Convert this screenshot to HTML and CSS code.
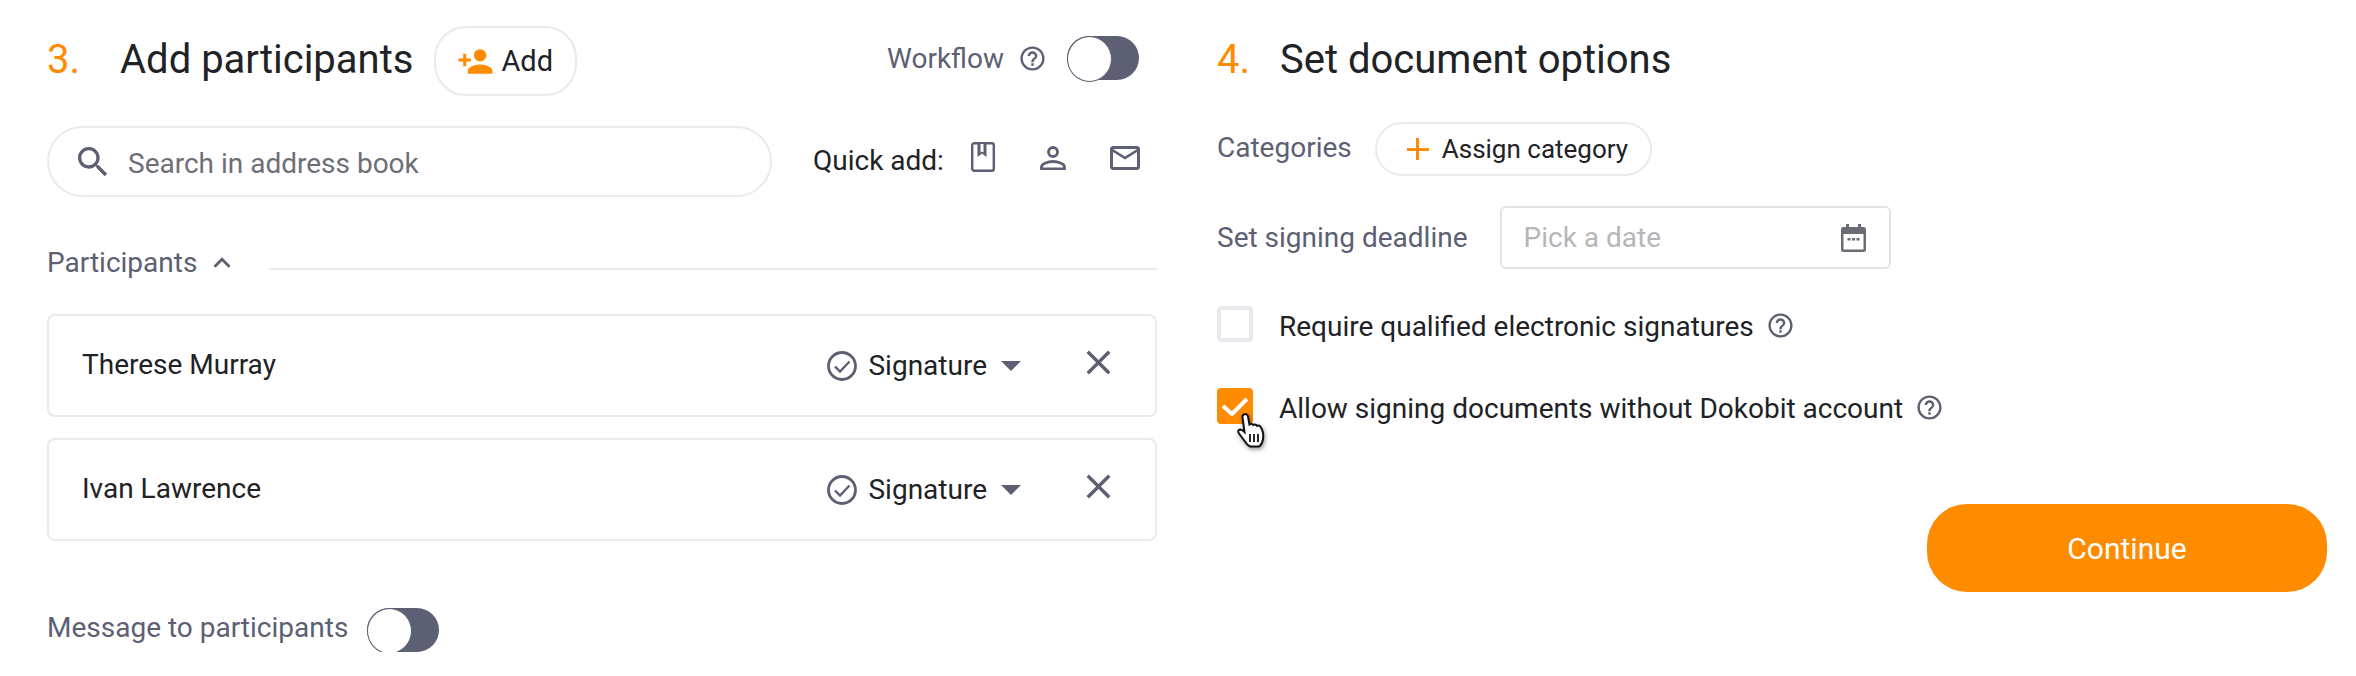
FILE: index.html
```html
<!DOCTYPE html>
<html lang="en">
<head>
    <meta charset="UTF-8">
    <title>Add participants</title>
    <link rel="stylesheet" href="styles.css">
</head>
<body>

<svg class="icon-defs" aria-hidden="true">
    <symbol id="i-help" viewBox="0 0 24 24"><path d="M11 18h2v-2h-2v2zm1-16C6.48 2 2 6.48 2 12s4.48 10 10 10 10-4.48 10-10S17.52 2 12 2zm0 18c-4.41 0-8-3.59-8-8s3.59-8 8-8 8 3.59 8 8-3.59 8-8 8zm0-14c-2.21 0-4 1.79-4 4h2c0-1.1.9-2 2-2s2 .9 2 2c0 2-3 1.75-3 5h2c0-2.25 3-2.5 3-5 0-2.21-1.79-4-4-4z"/></symbol>
    <symbol id="i-close" viewBox="0 0 24 24"><path d="M19 6.41L17.59 5 12 10.59 6.41 5 5 6.41 10.59 12 5 17.59 6.41 19 12 13.41 17.59 19 19 17.59 13.41 12z"/></symbol>
    <symbol id="i-signed" viewBox="0 0 30 30"><circle cx="15" cy="15" r="13.5" fill="none" stroke="currentColor" stroke-width="2.8"/><path d="M8 15.5l5 5 9.5-10" fill="none" stroke="currentColor" stroke-width="2.4"/></symbol>
</svg>

<div class="page">

    <!-- Step 3 -->
    <section class="col col-left">
        <div class="head">
            <span class="num">3.</span>
            <h2>Add participants</h2>
            <button class="btn-add">
                <svg class="ic-add" viewBox="0 0 24 24"><path d="M15 12c2.21 0 4-1.79 4-4s-1.79-4-4-4-4 1.79-4 4 1.79 4 4 4zm-9-2V7H4v3H1v2h3v3h2v-3h3v-2H6zm9 4c-2.67 0-8 1.34-8 4v2h16v-2c0-2.66-5.33-4-8-4z"/></svg>
                Add
            </button>
            <div class="workflow">
                <span class="muted">Workflow</span>
                <svg class="ic-help"><use href="#i-help"/></svg>
                <span class="toggle"></span>
            </div>
        </div>

        <div class="search-row">
            <div class="search">
                <svg class="ic-search" viewBox="0 0 24 24"><path d="M15.5 14h-.79l-.28-.27C15.41 12.59 16 11.11 16 9.5 16 5.91 13.09 3 9.5 3S3 5.91 3 9.5 5.91 16 9.5 16c1.61 0 3.09-.59 4.23-1.57l.27.28v.79l5 4.99L20.49 19l-4.99-5zm-6 0C7.01 14 5 11.99 5 9.5S7.01 5 9.5 5 14 7.01 14 9.5 11.99 14 9.5 14z"/></svg>
                <span class="placeholder">Search in address book</span>
            </div>
            <span class="quick-label">Quick add:</span>
            <svg class="ic-book" viewBox="0 0 24 30"><rect x="1.2" y="1.2" width="21.6" height="27.6" rx="2" fill="none" stroke="currentColor" stroke-width="2.4"/><path d="M6.5 2h9v13l-4.500-3.500L6.500 15z"/><path d="M9.500 2h3v8.500l-1.500-1-1.500 1z" fill="#fff"/></svg>
            <svg class="ic-person" viewBox="0 0 26 24"><circle cx="13" cy="6" r="4.500" fill="none" stroke="currentColor" stroke-width="2.800"/><path d="M1.500 22.800v-1.800c0-3.500 7-5.500 11.500-5.500s11.500 2 11.500 5.500v1.800z" fill="none" stroke="currentColor" stroke-width="2.800"/></svg>
            <svg class="ic-mail" viewBox="2 4 20 16"><path d="M20 4H4c-1.100 0-1.990.9-1.990 2L2 18c0 1.100.9 2 2 2h16c1.100 0 2-.9 2-2V6c0-1.100-.9-2-2-2zm0 14H4V8l8 5 8-5v10zm-8-7L4 6h16l-8 5z"/></svg>
        </div>

        <div class="list-head">
            <span class="muted">Participants</span>
            <svg class="ic-chevron" viewBox="0 0 24 24"><path d="M12 8l-6 6 1.410 1.410L12 10.830l4.590 4.580L18 14z"/></svg>
            <span class="rule"></span>
        </div>

        <div class="cards">
            <div class="card">
                <span class="name">Therese Murray</span>
                <svg class="ic-signed"><use href="#i-signed"/></svg>
                <span class="role">Signature</span>
                <span class="caret"></span>
                <svg class="ic-close"><use href="#i-close"/></svg>
            </div>
            <div class="card">
                <span class="name">Ivan Lawrence</span>
                <svg class="ic-signed"><use href="#i-signed"/></svg>
                <span class="role">Signature</span>
                <span class="caret"></span>
                <svg class="ic-close"><use href="#i-close"/></svg>
            </div>
        </div>

        <div class="message-row">
            <span class="muted">Message to participants</span>
            <span class="toggle"></span>
        </div>
    </section>

    <!-- Step 4 -->
    <section class="col col-right">
        <div class="head">
            <span class="num num-narrow">4.</span>
            <h2>Set document options</h2>
        </div>

        <div class="cat-row">
            <span class="muted">Categories</span>
            <button class="btn-assign"><span class="plus"></span>Assign category</button>
        </div>

        <div class="date-row">
            <span class="muted">Set signing deadline</span>
            <div class="date-input">
                <span class="date-placeholder">Pick a date</span>
                <svg class="ic-cal" viewBox="0 0 25 28"><path d="M5 0h3v3h9V0h3v3h2.500A2.500 2.500 0 0 1 25 5.500v20a2.500 2.500 0 0 1-2.500 2.500h-20A2.500 2.500 0 0 1 0 25.500v-20A2.500 2.500 0 0 1 2.500 3H5zM2.500 10v15.500h20V10z"/><path d="M6.500 14h3v2.500h-3zM11 14h3v2.500h-3zM15.500 14h3v2.500h-3z"/></svg>
            </div>
        </div>

        <div class="check-row">
            <span class="checkbox"></span>
            <span class="check-text">Require qualified electronic signatures</span>
            <svg class="ic-help-sm"><use href="#i-help"/></svg>
        </div>

        <div class="check-row check-row-2">
            <span class="checkbox checked">
                <svg class="ic-tick" viewBox="0 0 28 19"><path d="M2 9l9 8L26 2" fill="none" stroke="#fff" stroke-width="4"/></svg>
                <!-- mouse pointer -->
                <svg class="pointer" viewBox="0 0 32 36">
                    <path d="M8 2.500c1.800-1 3.600 0 4 2l1.500 8c1.500-1 3-.8 3.800.5 1.400-.8 3-.4 3.700.9 1.500-.7 3-.2 3.700 1.100 1.500 2.500 3 8 2.300 12-.6 3.500-2.300 6.500-4 7.500H14c-2-.800-3.500-2.500-5-5l-6-8c-1.500-2-.8-3.800 1.200-4 1.300 0 2.600.8 4.300 2.500L6.500 5.500c-.3-1.200.3-2.400 1.500-3z" fill="#fff" stroke="#111" stroke-width="2"/>
                    <path d="M14 22v8M18 22v8M22 22v8" stroke="#111" stroke-width="1.800"/>
                </svg>
            </span>
            <span class="check-text">Allow signing documents without Dokobit account</span>
            <svg class="ic-help-sm"><use href="#i-help"/></svg>
        </div>

        <button class="btn-continue">Continue</button>
    </section>

</div>

</body>
</html>
```

FILE: styles.css
```css
* {
    margin: 0;
    padding: 0;
    box-sizing: border-box;
    font-family: "Roboto", sans-serif;
}

body {
    background: #fff;
    color: #212226;
    font-size: 28px;
}

svg {
    fill: currentColor;
    flex-shrink: 0;
}

.icon-defs {
    display: none;
}

.page {
    display: flex;
    padding: 26px 0 0 47px;
}

.col {
    display: flex;
    flex-direction: column;
    width: 1110px;
}

.col-right {
    margin-left: 60px;
}

.muted {
    color: #5c6072;
}

/* Section heading */
.head {
    display: flex;
    align-items: center;
    height: 70px;
}

.num {
    width: 73px;
    margin-top: -4px;
    color: #ff8c00;
    font-size: 40px;
}

.num-narrow {
    width: 63px;
}

h2 {
    margin-top: -4px;
    font-size: 40px;
    font-weight: 400;
}

.btn-add {
    display: flex;
    align-items: center;
    height: 70px;
    margin-left: 21px;
    padding: 0 22px 0 21px;
    background: #fff;
    border: 2px solid #e9eaec;
    border-radius: 32px;
    color: #212226;
    font-size: 29px;
}

.ic-add {
    width: 37px;
    height: 37px;
    margin-right: 7px;
    color: #ff8c00;
}

.workflow {
    display: flex;
    align-items: center;
    margin: -6px 18px 0 auto;
}

.ic-help {
    width: 29px;
    height: 29px;
    margin: 0 20px 0 14px;
    color: #5c6072;
}

.toggle {
    position: relative;
    display: block;
    width: 72px;
    height: 44px;
    background: #5c6072;
    border-radius: 22px;
}

.toggle::before {
    content: "";
    position: absolute;
    left: 0;
    top: 0;
    width: 43px;
    height: 44px;
    background: #fff;
    border: 1.5px solid #5c6072;
    border-radius: 50%;
}

/* Search row */
.search-row {
    display: flex;
    align-items: center;
    margin-top: 30px;
    color: #5c6072;
}

.search {
    display: flex;
    align-items: center;
    width: 725px;
    height: 71px;
    padding-left: 24px;
    border: 2px solid #e9eaec;
    border-radius: 36px;
}

.ic-search {
    width: 40px;
    height: 40px;
    margin-right: 15px;
}

.placeholder {
    margin-top: 4px;
    color: #6d6f78;
}

.quick-label {
    margin: -3px 27px 0 41px;
    color: #212226;
}

.ic-book {
    width: 24px;
    height: 30px;
    margin-top: -10px;
}

.ic-person {
    width: 26px;
    height: 24px;
    margin: -7px 0 0 45px;
}

.ic-mail {
    width: 30px;
    height: 24px;
    margin: -7px 0 0 44px;
}

/* Participants list */
.list-head {
    display: flex;
    align-items: center;
    height: 40px;
    margin-top: 46px;
}

.list-head .muted {
    margin-top: -2px;
}

.ic-chevron {
    width: 34px;
    height: 34px;
    margin: 0 0 0 8px;
    color: #5c6072;
}

.rule {
    flex: 1;
    height: 2px;
    margin: 12px 0 0 30px;
    background: #e9eaec;
}

.cards {
    display: flex;
    flex-direction: column;
    gap: 21px;
    margin-top: 31px;
}

.card {
    display: flex;
    align-items: center;
    height: 103px;
    padding: 0 42px 0 33px;
    border: 2px solid #e9eaec;
    border-radius: 8px;
}

.name {
    flex: 1;
    margin-top: -2px;
}

.ic-signed {
    width: 30px;
    height: 30px;
    color: #5c6072;
}

.role {
    margin-left: 11px;
}

.caret {
    width: 0;
    height: 0;
    margin-left: 14px;
    border-left: 10px solid transparent;
    border-right: 10px solid transparent;
    border-top: 10px solid #5c6072;
}

.ic-close {
    width: 41px;
    height: 41px;
    margin: -6px -6px 0 57px;
    color: #5c6072;
}

.message-row {
    display: flex;
    align-items: center;
    gap: 19px;
    margin-top: 67px;
}

.message-row .muted {
    margin-top: -5px;
}

/* Options column */
.cat-row {
    display: flex;
    align-items: center;
    margin-top: 26px;
}

.cat-row .muted {
    margin-top: -3px;
}

.btn-assign {
    display: flex;
    align-items: center;
    height: 54px;
    margin-left: 23px;
    padding: 0 22px 0 30px;
    background: #fff;
    border: 2px solid #e9eaec;
    border-radius: 27px;
    color: #212226;
    font-size: 26px;
}

.plus {
    position: relative;
    width: 22px;
    height: 22px;
    margin-right: 13px;
    background: linear-gradient(#ff8c00, #ff8c00) center / 100% 3px no-repeat,
                linear-gradient(#ff8c00, #ff8c00) center / 3px 100% no-repeat;
}

.date-row {
    display: flex;
    align-items: center;
    margin-top: 30px;
}

.date-input {
    display: flex;
    align-items: center;
    justify-content: space-between;
    width: 391px;
    height: 63px;
    margin-left: 32px;
    padding: 0 23px 0 22px;
    border: 2px solid #e0e4e8;
    border-radius: 6px;
}

.date-placeholder {
    color: #b5b6ba;
}

.ic-cal {
    width: 25px;
    height: 28px;
    color: #6b6d75;
}

.check-row {
    display: flex;
    align-items: center;
    height: 36px;
    margin-top: 37px;
}

.check-row-2 {
    margin-top: 46px;
}

.checkbox {
    position: relative;
    display: block;
    width: 36px;
    height: 36px;
    border: 4px solid #e8e9ec;
    border-radius: 4px;
}

.checked {
    background: #ff8c00;
    border-color: #ff8c00;
}

.ic-tick {
    position: absolute;
    left: 0;
    top: 5px;
    width: 28px;
    height: 19px;
}

.pointer {
    position: absolute;
    left: 14px;
    top: 20px;
    width: 34px;
    height: 36px;
    filter: drop-shadow(1px 2px 2px rgba(0, 0, 0, 0.4));
}

.check-text {
    margin: 4px 0 0 26px;
}

.ic-help-sm {
    width: 29px;
    height: 29px;
    margin: 2px 0 0 12px;
    color: #5c6072;
}

.btn-continue {
    align-self: flex-end;
    width: 400px;
    height: 88px;
    margin-top: 80px;
    background: #ff8c00;
    border: none;
    border-radius: 40px;
    color: #fff;
    font-size: 30px;
}
```
